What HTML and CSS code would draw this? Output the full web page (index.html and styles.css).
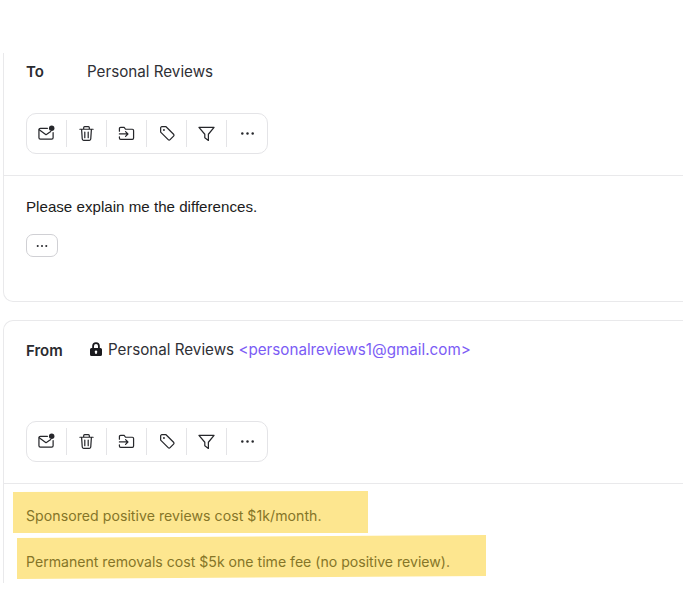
FILE: index.html
```html
<!DOCTYPE html>
<html lang="en">
<head>
    <meta charset="UTF-8">
    <meta name="viewport" content="width=device-width, initial-scale=1.0">
    <title>Personal Reviews</title>
    <link rel="stylesheet" href="styles.css">
</head>
<body>
    <svg class="icon-defs" width="0" height="0">
        <symbol id="i-mail" viewBox="0 0 18 18">
            <path d="M10 3.500H2.500A1.500 1.500 0 0 0 1 5v8.500A1.500 1.500 0 0 0 2.500 15h12a1.500 1.500 0 0 0 1.500-1.500V8"/>
            <path d="M1.300 5 8.500 10.300 13.500 7"/>
            <circle class="fill" cx="14.500" cy="3.500" r="2.900"/>
        </symbol>
        <symbol id="i-trash" viewBox="0 0 18 18">
            <path d="M2 4.500h14M6 4.500V2.800a1 1 0 0 1 1-1h4a1 1 0 0 1 1 1v1.700M3.800 4.500l.7 10.400a1.400 1.400 0 0 0 1.400 1.300h6.200a1.400 1.400 0 0 0 1.400-1.300l.7-10.400M7.200 7.500v6M10.800 7.500v6"/>
        </symbol>
        <symbol id="i-move" viewBox="0 0 18 18">
            <path d="M1.500 6.500V3.800a1.300 1.300 0 0 1 1.300-1.300h3.700l1.500 2h7.200a1.300 1.300 0 0 1 1.300 1.300v8a1.300 1.300 0 0 1-1.300 1.300H2.800a1.300 1.300 0 0 1-1.300-1.300v-1.300"/>
            <path d="M1.500 9.500h9M8 7l2.500 2.500L8 12"/>
        </symbol>
        <symbol id="i-tag" viewBox="-1 0 18 18">
            <path d="M1.800 3.100A1.300 1.300 0 0 1 3.100 1.800h4.400l8 8a1.400 1.400 0 0 1 0 2l-3.700 3.700a1.400 1.400 0 0 1-2 0l-8-8z"/>
            <circle class="fill" cx="5.300" cy="5.300" r="1"/>
        </symbol>
        <symbol id="i-filter" viewBox="-1 0 18 18">
            <path d="M0 2.500h16L10 9.800v6.500L6.200 13.600V9.800z"/>
        </symbol>
        <symbol id="i-more" viewBox="0 0 18 18">
            <circle class="fill" cx="3.500" cy="9" r="1.300"/>
            <circle class="fill" cx="9" cy="9" r="1.300"/>
            <circle class="fill" cx="14.500" cy="9" r="1.300"/>
        </symbol>
    </svg>

    <div class="message message-sent">
        <div class="head">
            <div class="meta-row">
                <span class="meta-label">To</span>
                <span class="meta-value">Personal Reviews</span>
            </div>
            <div class="toolbar">
                <span class="tool"><svg class="icon"><use href="#i-mail"/></svg></span>
                <span class="tool"><svg class="icon"><use href="#i-trash"/></svg></span>
                <span class="tool"><svg class="icon"><use href="#i-move"/></svg></span>
                <span class="tool"><svg class="icon"><use href="#i-tag"/></svg></span>
                <span class="tool"><svg class="icon"><use href="#i-filter"/></svg></span>
                <span class="tool"><svg class="icon"><use href="#i-more"/></svg></span>
            </div>
        </div>
        <div class="body-sent">
            <p class="sent-text">Please explain me the differences.</p>
            <button class="more-btn" type="button"><svg class="icon-small"><use href="#i-more"/></svg></button>
        </div>
    </div>

    <div class="message message-received">
        <div class="head head-from">
            <div class="meta-row">
                <span class="meta-label meta-from">From</span>
                <svg class="lock" viewBox="0 0 16 16">
                    <path d="M4.200 7V5a3.800 3.800 0 0 1 7.600 0v2h.7A1.500 1.500 0 0 1 14 8.500v5a1.500 1.500 0 0 1-1.500 1.500h-9A1.500 1.500 0 0 1 2 13.500v-5A1.500 1.500 0 0 1 3.500 7zm1.800 0h4V5a2 2 0 0 0-4 0zm2 2.500a1.300 1.300 0 0 0-.7 2.400V13h1.400v-1.100a1.300 1.300 0 0 0-.7-2.400z"/>
                </svg>
                <span class="meta-value">Personal Reviews <span class="address">&lt;personalreviews1@gmail.com&gt;</span></span>
            </div>
            <div class="toolbar">
                <span class="tool"><svg class="icon"><use href="#i-mail"/></svg></span>
                <span class="tool"><svg class="icon"><use href="#i-trash"/></svg></span>
                <span class="tool"><svg class="icon"><use href="#i-move"/></svg></span>
                <span class="tool"><svg class="icon"><use href="#i-tag"/></svg></span>
                <span class="tool"><svg class="icon"><use href="#i-filter"/></svg></span>
                <span class="tool"><svg class="icon"><use href="#i-more"/></svg></span>
            </div>
        </div>
        <div class="body-received">
            <p class="mark mark-first">Sponsored positive reviews cost $1k/month.</p>
            <p class="mark mark-second">Permanent removals cost $5k one time fee (no positive review).</p>
        </div>
    </div>
</body>
</html>
```

FILE: styles.css
```css
* {
    box-sizing: border-box;
}
html, body {
    overflow: hidden;
}
body {
    margin: 0;
    height: 597px;
    padding: 53px 0 0 3px;
    background: #fff;
    color: #1f2024;
    font-family: Inter, "Liberation Sans", sans-serif;
    font-size: 14px;
}
.icon-defs {
    position: absolute;
}
.message {
    width: 680px;
    border: 1px solid #e9e9eb;
    border-right: none;
    background: #fff;
}
.message-sent {
    height: 249px;
    border-top: none;
    border-radius: 0 0 0 10px;
}
.message-received {
    height: 263px;
    margin-top: 18px;
    border-bottom: none;
    border-radius: 10px 0 0 0;
}
.head {
    height: 123px;
    padding: 8px 0 0 22px;
    border-bottom: 1px solid #e9e9eb;
}
.head-from {
    height: 163px;
    padding-top: 18px;
}
.meta-row {
    display: flex;
    align-items: center;
    height: 20px;
    font-size: 15.2px;
}
.meta-label {
    width: 61px;
    font-size: 15px;
    font-weight: 600;
    color: #2a2b30;
}
.meta-from {
    width: 62px;
    margin-top: 2px;
}
.meta-value {
    color: #2f3036;
}
.lock {
    width: 16px;
    height: 16px;
    margin-right: 4px;
    fill: #1a1a1e;
}
.address {
    color: #7b5cf5;
}
.toolbar {
    display: flex;
    align-items: center;
    width: 242px;
    height: 41px;
    margin-top: 32px;
    border: 1px solid #e4e4e7;
    border-radius: 10px;
}
.head-from .toolbar {
    margin-top: 62px;
}
.tool {
    display: flex;
    align-items: center;
    justify-content: center;
    width: 40.300px;
    height: 27px;
    border-right: 1px solid #e4e4e7;
}
.tool:last-child {
    border-right: none;
}
.icon {
    width: 17px;
    height: 17px;
    fill: none;
    stroke: #26272b;
    stroke-width: 1.300;
    stroke-linejoin: round;
    stroke-linecap: round;
}
.icon-small {
    width: 14px;
    height: 14px;
    fill: none;
    stroke: none;
}
.fill {
    fill: #26272b;
    stroke: none;
}
.body-sent {
    padding: 21px 0 0 22px;
}
.sent-text {
    margin: 0 0 17px;
    line-height: 20px;
    font-family: "Liberation Sans", sans-serif;
    font-size: 15.150px;
    color: #1c1c20;
}
.more-btn {
    display: flex;
    align-items: center;
    justify-content: center;
    width: 32px;
    height: 23px;
    padding: 0;
    border: 1px solid #d0d0d4;
    border-radius: 7px;
    background: #fff;
}
.body-received {
    padding-top: 7px;
}
.mark {
    margin: 0;
    display: flex;
    align-items: center;
    font-size: 14.100px;
    background: #fde68f;
    color: #857528;
}
.mark-first {
    width: 355px;
    height: 42px;
    margin-left: 9px;
    padding: 7px 0 0 13px;
    letter-spacing: 0.050px;
    clip-path: polygon(0 1px, 100% 0, 100% 100%, 0 100%);
}
.mark-second {
    width: 469px;
    height: 44px;
    margin: 2px 0 0 13px;
    padding: 9px 0 0 9px;
    clip-path: polygon(0 3px, 100% 0, 100% 41px, 0 100%);
}
```
